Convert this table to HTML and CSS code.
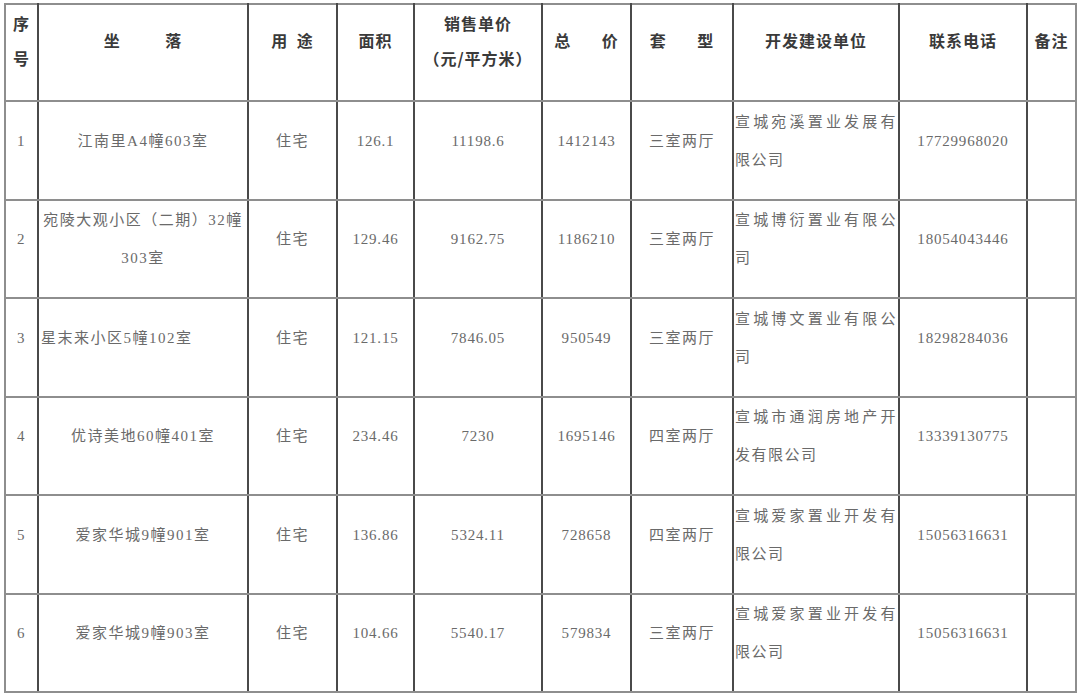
FILE: index.html
```html
<!DOCTYPE html>
<html lang="zh">
<head>
<meta charset="utf-8">
<link rel="stylesheet" href="styles.css">
</head>
<body>
<table class="sales">
  <colgroup>
    <col class="c-no">
    <col class="c-loc">
    <col class="c-use">
    <col class="c-area">
    <col class="c-price">
    <col class="c-total">
    <col class="c-type">
    <col class="c-dev">
    <col class="c-tel">
    <col class="c-note">
  </colgroup>
  <thead>
    <tr class="head">
      <th>序号</th>
      <th><span class="w-big">坐 落</span></th>
      <th><span class="w-small">用 途</span></th>
      <th>面积</th>
      <th>销售单价<br>（元/平方米）</th>
      <th><span class="w-mid">总 价</span></th>
      <th><span class="w-mid">套 型</span></th>
      <th>开发建设单位</th>
      <th>联系电话</th>
      <th>备注</th>
    </tr>
  </thead>
  <tbody>
    <tr class="odd">
      <td>1</td>
      <td class="loc">江南里A4幢603室</td>
      <td>住宅</td>
      <td class="num">126.1</td>
      <td class="num">11198.6</td>
      <td class="num">1412143</td>
      <td>三室两厅</td>
      <td class="dev">宣城宛溪置业发展有限公司</td>
      <td class="num">17729968020</td>
      <td></td>
    </tr>
    <tr class="even">
      <td>2</td>
      <td class="loc">宛陵大观小区（二期）32幢303室</td>
      <td>住宅</td>
      <td class="num">129.46</td>
      <td class="num">9162.75</td>
      <td class="num">1186210</td>
      <td>三室两厅</td>
      <td class="dev">宣城博衍置业有限公司</td>
      <td class="num">18054043446</td>
      <td></td>
    </tr>
    <tr class="odd">
      <td>3</td>
      <td class="loc left">星末来小区5幢102室</td>
      <td>住宅</td>
      <td class="num">121.15</td>
      <td class="num">7846.05</td>
      <td class="num">950549</td>
      <td>三室两厅</td>
      <td class="dev">宣城博文置业有限公司</td>
      <td class="num">18298284036</td>
      <td></td>
    </tr>
    <tr class="even">
      <td>4</td>
      <td class="loc">优诗美地60幢401室</td>
      <td>住宅</td>
      <td class="num">234.46</td>
      <td class="num">7230</td>
      <td class="num">1695146</td>
      <td>四室两厅</td>
      <td class="dev">宣城市通润房地产开发有限公司</td>
      <td class="num">13339130775</td>
      <td></td>
    </tr>
    <tr class="odd">
      <td>5</td>
      <td class="loc">爱家华城9幢901室</td>
      <td>住宅</td>
      <td class="num">136.86</td>
      <td class="num">5324.11</td>
      <td class="num">728658</td>
      <td>四室两厅</td>
      <td class="dev">宣城爱家置业开发有限公司</td>
      <td class="num">15056316631</td>
      <td></td>
    </tr>
    <tr class="even">
      <td>6</td>
      <td class="loc">爱家华城9幢903室</td>
      <td>住宅</td>
      <td class="num">104.66</td>
      <td class="num">5540.17</td>
      <td class="num">579834</td>
      <td>三室两厅</td>
      <td class="dev">宣城爱家置业开发有限公司</td>
      <td class="num">15056316631</td>
      <td></td>
    </tr>
  </tbody>
</table>
</body>
</html>
```

FILE: styles.css
```css
html, body {
  margin: 0;
  padding: 0;
  background: #ffffff;
}

body {
  padding: 3px 0 0 4px;
}

.sales {
  border-collapse: collapse;
  table-layout: fixed;
  width: 1071px;
  font-family: "Liberation Serif", "Noto Sans CJK SC", serif;
  color: #6a6a6a;
}

.c-no { width: 33px; }
.c-loc { width: 210px; }
.c-use { width: 89px; }
.c-area { width: 77px; }
.c-price { width: 128px; }
.c-total { width: 89px; }
.c-type { width: 102px; }
.c-dev { width: 166px; }
.c-tel { width: 128px; }
.c-note { width: 49px; }

.sales th,
.sales td {
  border-top: 2px solid #8e8e8e;
  border-bottom: 2px solid #8e8e8e;
  border-left: 2px solid #4a4a4a;
  border-right: 2px solid #4a4a4a;
  padding: 0;
  vertical-align: middle;
  text-align: center;
  overflow: hidden;
}

.sales th:first-child,
.sales td:first-child {
  border-left-color: #8e8e8e;
}

.sales th:last-child,
.sales td:last-child {
  border-right-color: #8e8e8e;
}

.head {
  height: 97px;
}

.sales th {
  font-family: "Noto Sans CJK SC", sans-serif;
  font-weight: 700;
  font-size: 16px;
  line-height: 35px;
  letter-spacing: 1px;
  color: #3a3a3a;
  padding-bottom: 24px;
}

.w-big { word-spacing: 40px; }
.w-mid { word-spacing: 26px; }
.w-small { word-spacing: 4px; }

.sales tbody tr.odd {
  height: 99px;
}

.sales tbody tr.even {
  height: 98px;
}

.sales td {
  font-size: 15px;
  line-height: 38px;
  letter-spacing: 1.5px;
  padding-bottom: 20px;
}

.sales td.num {
  letter-spacing: 0.8px;
}

.sales td.loc {
  padding-left: 2px;
  padding-right: 2px;
}

.sales td.left {
  text-align: left;
}

.sales td.dev {
  text-align: justify;
  padding-left: 1px;
  padding-right: 1px;
}
```
